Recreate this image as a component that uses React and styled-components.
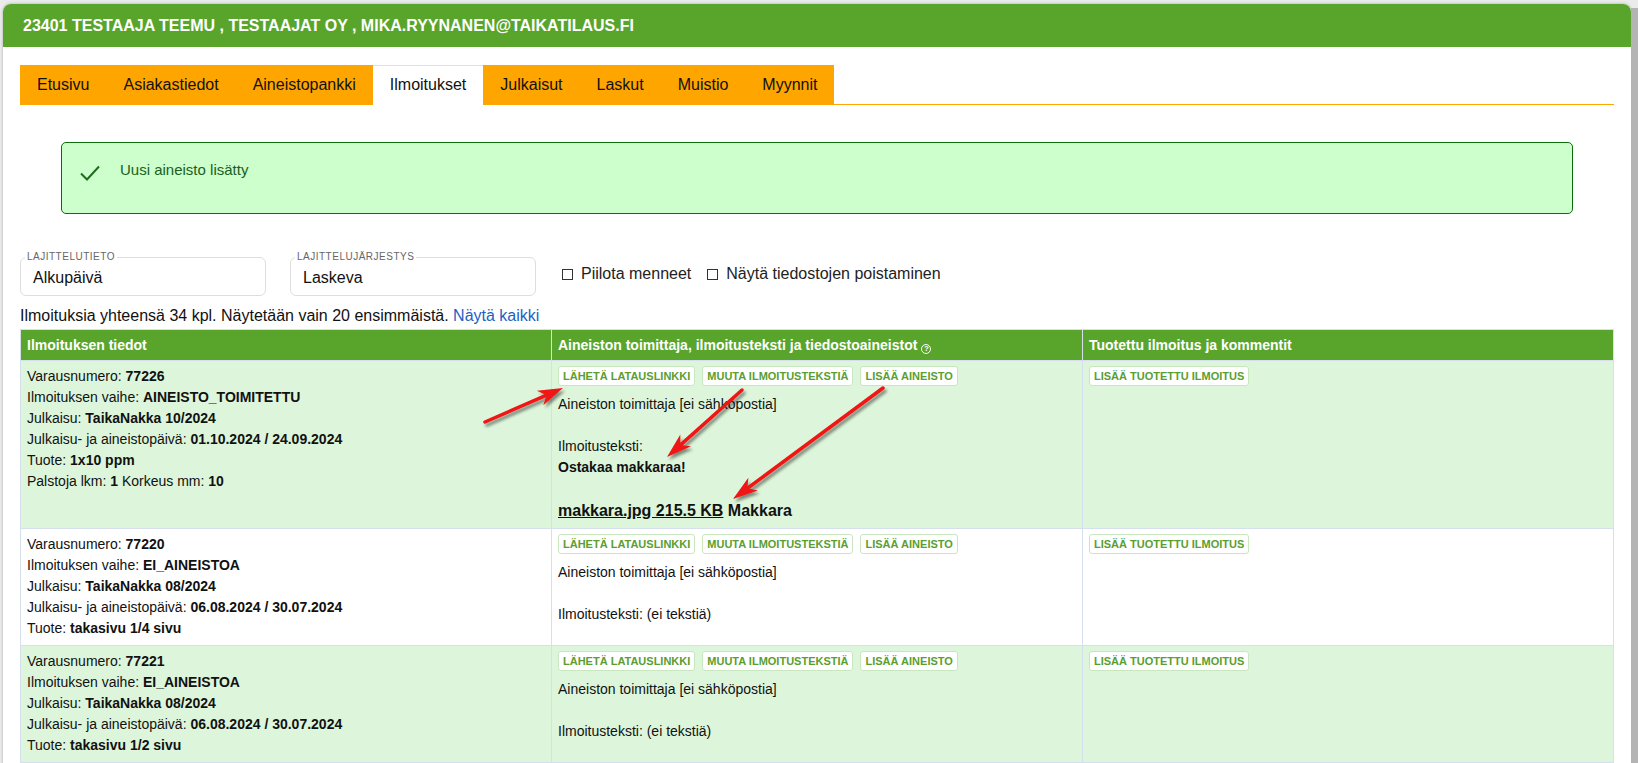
import React from "react";
import styled, { createGlobalStyle } from "styled-components";

const GlobalStyle = createGlobalStyle`
  html, body { margin: 0; padding: 0; overflow: hidden; background: #ebebeb; }
  body { font-family: "Liberation Sans", Arial, sans-serif; color: #111; }
  * { box-sizing: border-box; }
`;

const Page = styled.div`
  position: relative;
  display: flex;
  align-items: flex-start;
  width: 1638px;
  height: 763px;
  overflow: hidden;
  background: #ebebeb;
`;

const Card = styled.div`
  flex: 1;
  margin: 4px 0 0 3px;
  min-height: 900px;
  background: #fff;
  border-radius: 8px 8px 0 0;
  box-shadow: 0 0 3px rgba(0, 0, 0, 0.3);
`;

const Strip = styled.div`
  width: 7px;
  height: 760px;
  margin-top: 8px;
  background: #b4b4b4;
`;

const Header = styled.header`
  height: 43px;
  display: flex;
  align-items: center;
  padding: 0 20px;
  background: #59a52c;
  border-radius: 8px 8px 0 0;
  color: #fff;
  font-size: 16px;
  font-weight: bold;
  text-transform: uppercase;
`;

const Body = styled.main`
  padding: 18px 17px 0 17px;
`;

const Tabs = styled.nav`
  display: flex;
  border-bottom: 1px solid #ffa500;
`;

const Tab = styled.a`
  padding: 10px 17px;
  font-size: 16px;
  line-height: 19px;
  color: #111;
  text-decoration: none;
  background: ${(p) => (p.$active ? "#fff" : "#ffa500")};
  box-shadow: ${(p) => (p.$active ? "inset 0 1px 0 #d4ead4" : "none")};
  margin-bottom: ${(p) => (p.$active ? "-1px" : "0")};
  padding-bottom: ${(p) => (p.$active ? "11px" : "10px")};
`;

const Alert = styled.div`
  display: flex;
  align-items: flex-start;
  gap: 19px;
  margin: 37px 41px 0 41px;
  padding: 18px 18px 31px 17px;
  background: #ccffcc;
  border: 1px solid #0b6e0b;
  border-radius: 5px;
`;

const AlertText = styled.span`
  font-size: 15px;
  line-height: 17px;
  color: #1d5e1d;
`;

const CheckIcon = styled.svg`
  flex: none;
  margin-top: 3px;
`;

const Filters = styled.div`
  display: flex;
  align-items: center;
  margin-top: 38px;
`;

const Field = styled.fieldset`
  width: 246px;
  min-width: 0;
  margin: 0 24px 0 0;
  padding: 0 0 0 4px;
  border: 1px solid #dedede;
  border-radius: 6px;
`;

const Legend = styled.legend`
  padding: 0 2px;
  font-size: 10px;
  line-height: 10px;
  letter-spacing: 0.5px;
  text-transform: uppercase;
  color: #666;
`;

const FieldValue = styled.div`
  padding: 6px 8px 7px;
  font-size: 16px;
  line-height: 20px;
  color: #111;
`;

const Checks = styled.div`
  display: flex;
  align-items: center;
  gap: 16px;
  margin-left: 2px;
`;

const CheckLabel = styled.label`
  display: flex;
  align-items: center;
  gap: 8px;
  font-size: 16px;
  line-height: 20px;
  color: #222;
`;

const Box = styled.span`
  width: 11px;
  height: 11px;
  border: 1px solid #333;
  background: #fff;
`;

const Count = styled.div`
  margin-top: 11px;
  font-size: 16px;
  line-height: 18px;
  color: #111;
`;

const Link = styled.a`
  color: #1e5fc2;
  text-decoration: none;
`;

const Table = styled.table`
  width: 100%;
  margin-top: 4px;
  border-collapse: collapse;
  table-layout: fixed;
`;

const Th = styled.th`
  height: 31px;
  padding: 0 6px;
  background: #59a52c;
  color: #fff;
  font-size: 14px;
  font-weight: bold;
  text-align: left;
  border: 1px solid #d5e0ec;
`;

const Tr = styled.tr`
  background: ${(p) => (p.$alt ? "#ddf6db" : "#fff")};
`;

const Td = styled.td`
  padding: 5px 6px 6px;
  vertical-align: top;
  font-size: 14px;
  line-height: 21px;
  color: #111;
  border: 1px solid #d5e0ec;
`;

const Help = styled.span`
  display: inline-flex;
  align-items: center;
  justify-content: center;
  width: 10px;
  height: 10px;
  margin-left: 4px;
  border: 1px solid #fff;
  border-radius: 50%;
  font-size: 8px;
  line-height: 8px;
  vertical-align: -1px;
`;

const Buttons = styled.div`
  display: flex;
  gap: 7px;
  margin-bottom: 8px;
`;

const Btn = styled.button`
  display: inline-flex;
  align-items: center;
  height: 20px;
  padding: 0 4px;
  font-family: "Liberation Sans", Arial, sans-serif;
  font-size: 11px;
  font-weight: bold;
  color: #5a9e30;
  background: #fff;
  border: 1px solid #c9e7bf;
  border-radius: 3px;
  white-space: nowrap;
`;

const Line = styled.div`
  min-height: 21px;
`;

const FileLine = styled.div`
  font-size: 16px;
  line-height: 23px;
  font-weight: bold;
`;

const FileLink = styled.a`
  color: #111;
  text-decoration: underline;
`;

const Overlay = styled.svg`
  position: absolute;
  left: 0;
  top: 0;
  pointer-events: none;
`;

const tabs = ["Etusivu", "Asiakastiedot", "Aineistopankki", "Ilmoitukset", "Julkaisut", "Laskut", "Muistio", "Myynnit"];

const rows = [
  {
    nro: "77226",
    vaihe: "AINEISTO_TOIMITETTU",
    julkaisu: "TaikaNakka 10/2024",
    pvm: "01.10.2024 / 24.09.2024",
    tuote: "1x10 ppm",
    palstat: true,
    teksti: "Ostakaa makkaraa!",
    file: true,
  },
  {
    nro: "77220",
    vaihe: "EI_AINEISTOA",
    julkaisu: "TaikaNakka 08/2024",
    pvm: "06.08.2024 / 30.07.2024",
    tuote: "takasivu 1/4 sivu",
  },
  {
    nro: "77221",
    vaihe: "EI_AINEISTOA",
    julkaisu: "TaikaNakka 08/2024",
    pvm: "06.08.2024 / 30.07.2024",
    tuote: "takasivu 1/2 sivu",
  },
];

const arrows = [
  { from: [485, 422], to: [563, 388] },
  { from: [742, 390], to: [667, 457] },
  { from: [883, 388], to: [733, 499] },
];

function Arrow({ from, to }) {
  const dx = to[0] - from[0];
  const dy = to[1] - from[1];
  const len = Math.hypot(dx, dy);
  const ux = dx / len;
  const uy = dy / len;
  const nx = -uy;
  const ny = ux;
  const L = 25;
  const W = 8;
  const bx = to[0] - ux * L;
  const by = to[1] - uy * L;
  const notchX = to[0] - ux * L * 0.72;
  const notchY = to[1] - uy * L * 0.72;
  const pts = [
    [to[0], to[1]],
    [bx + nx * W, by + ny * W],
    [notchX, notchY],
    [bx - nx * W, by - ny * W],
  ]
    .map((p) => p.join(","))
    .join(" ");
  return (
    <g filter="url(#arrowShadow)">
      <line x1={from[0]} y1={from[1]} x2={notchX + ux * 2} y2={notchY + uy * 2} stroke="#f01414" strokeWidth="3.5" strokeLinecap="round" />
      <polygon points={pts} fill="#f01414" />
    </g>
  );
}

function Col1({ r }) {
  return (
    <Td>
      <div>Varausnumero: <b>{r.nro}</b></div>
      <div>Ilmoituksen vaihe: <b>{r.vaihe}</b></div>
      <div>Julkaisu: <b>{r.julkaisu}</b></div>
      <div>Julkaisu- ja aineistopäivä: <b>{r.pvm}</b></div>
      <div>Tuote: <b>{r.tuote}</b></div>
      {r.palstat && (
        <div>
          Palstoja lkm: <b>1</b> Korkeus mm: <b>10</b>
        </div>
      )}
    </Td>
  );
}

function Col2({ r }) {
  return (
    <Td>
      <Buttons>
        <Btn>LÄHETÄ LATAUSLINKKI</Btn>
        <Btn>MUUTA ILMOITUSTEKSTIÄ</Btn>
        <Btn>LISÄÄ AINEISTO</Btn>
      </Buttons>
      <Line>Aineiston toimittaja [ei sähköpostia]</Line>
      <Line />
      {r.teksti ? (
        <>
          <Line>Ilmoitusteksti:</Line>
          <Line><b>{r.teksti}</b></Line>
        </>
      ) : (
        <Line>Ilmoitusteksti: (ei tekstiä)</Line>
      )}
      {r.file && (
        <>
          <Line />
          <FileLine>
            <FileLink href="#">makkara.jpg 215.5 KB</FileLink> Makkara
          </FileLine>
        </>
      )}
    </Td>
  );
}

export default function App() {
  return (
    <>
      <GlobalStyle />
      <Page>
        <Card>
          <Header>23401 TESTAAJA TEEMU , TESTAAJAT OY , MIKA.RYYNANEN@TAIKATILAUS.FI</Header>
          <Body>
            <Tabs>
              {tabs.map((t) => (
                <Tab key={t} href="#" $active={t === "Ilmoitukset"}>
                  {t}
                </Tab>
              ))}
            </Tabs>

            <Alert>
              <CheckIcon width="22" height="18" viewBox="0 0 22 18">
                <polyline points="2,9.5 8,15.5 20,2.5" fill="none" stroke="#1f6b1f" strokeWidth="2" />
              </CheckIcon>
              <AlertText>Uusi aineisto lisätty</AlertText>
            </Alert>

            <Filters>
              <Field>
                <Legend>Lajittelutieto</Legend>
                <FieldValue>Alkupäivä</FieldValue>
              </Field>
              <Field>
                <Legend>Lajittelujärjestys</Legend>
                <FieldValue>Laskeva</FieldValue>
              </Field>
              <Checks>
                <CheckLabel>
                  <Box />
                  Piilota menneet
                </CheckLabel>
                <CheckLabel>
                  <Box />
                  Näytä tiedostojen poistaminen
                </CheckLabel>
              </Checks>
            </Filters>

            <Count>
              Ilmoituksia yhteensä 34 kpl. Näytetään vain 20 ensimmäistä. <Link href="#">Näytä kaikki</Link>
            </Count>

            <Table>
              <thead>
                <tr>
                  <Th>Ilmoituksen tiedot</Th>
                  <Th>
                    Aineiston toimittaja, ilmoitusteksti ja tiedostoaineistot<Help>?</Help>
                  </Th>
                  <Th>Tuotettu ilmoitus ja kommentit</Th>
                </tr>
              </thead>
              <tbody>
                {rows.map((r, i) => (
                  <Tr key={r.nro} $alt={i % 2 === 0}>
                    <Col1 r={r} />
                    <Col2 r={r} />
                    <Td>
                      <Buttons>
                        <Btn>LISÄÄ TUOTETTU ILMOITUS</Btn>
                      </Buttons>
                    </Td>
                  </Tr>
                ))}
              </tbody>
            </Table>
          </Body>
        </Card>
        <Strip />
        <Overlay width="1638" height="763" viewBox="0 0 1638 763">
          <defs>
            <filter id="arrowShadow" x="-20%" y="-20%" width="140%" height="140%">
              <feDropShadow dx="2" dy="3" stdDeviation="1.6" floodColor="#000" floodOpacity="0.45" />
            </filter>
          </defs>
          {arrows.map((a, i) => (
            <Arrow key={i} from={a.from} to={a.to} />
          ))}
        </Overlay>
      </Page>
    </>
  );
}
